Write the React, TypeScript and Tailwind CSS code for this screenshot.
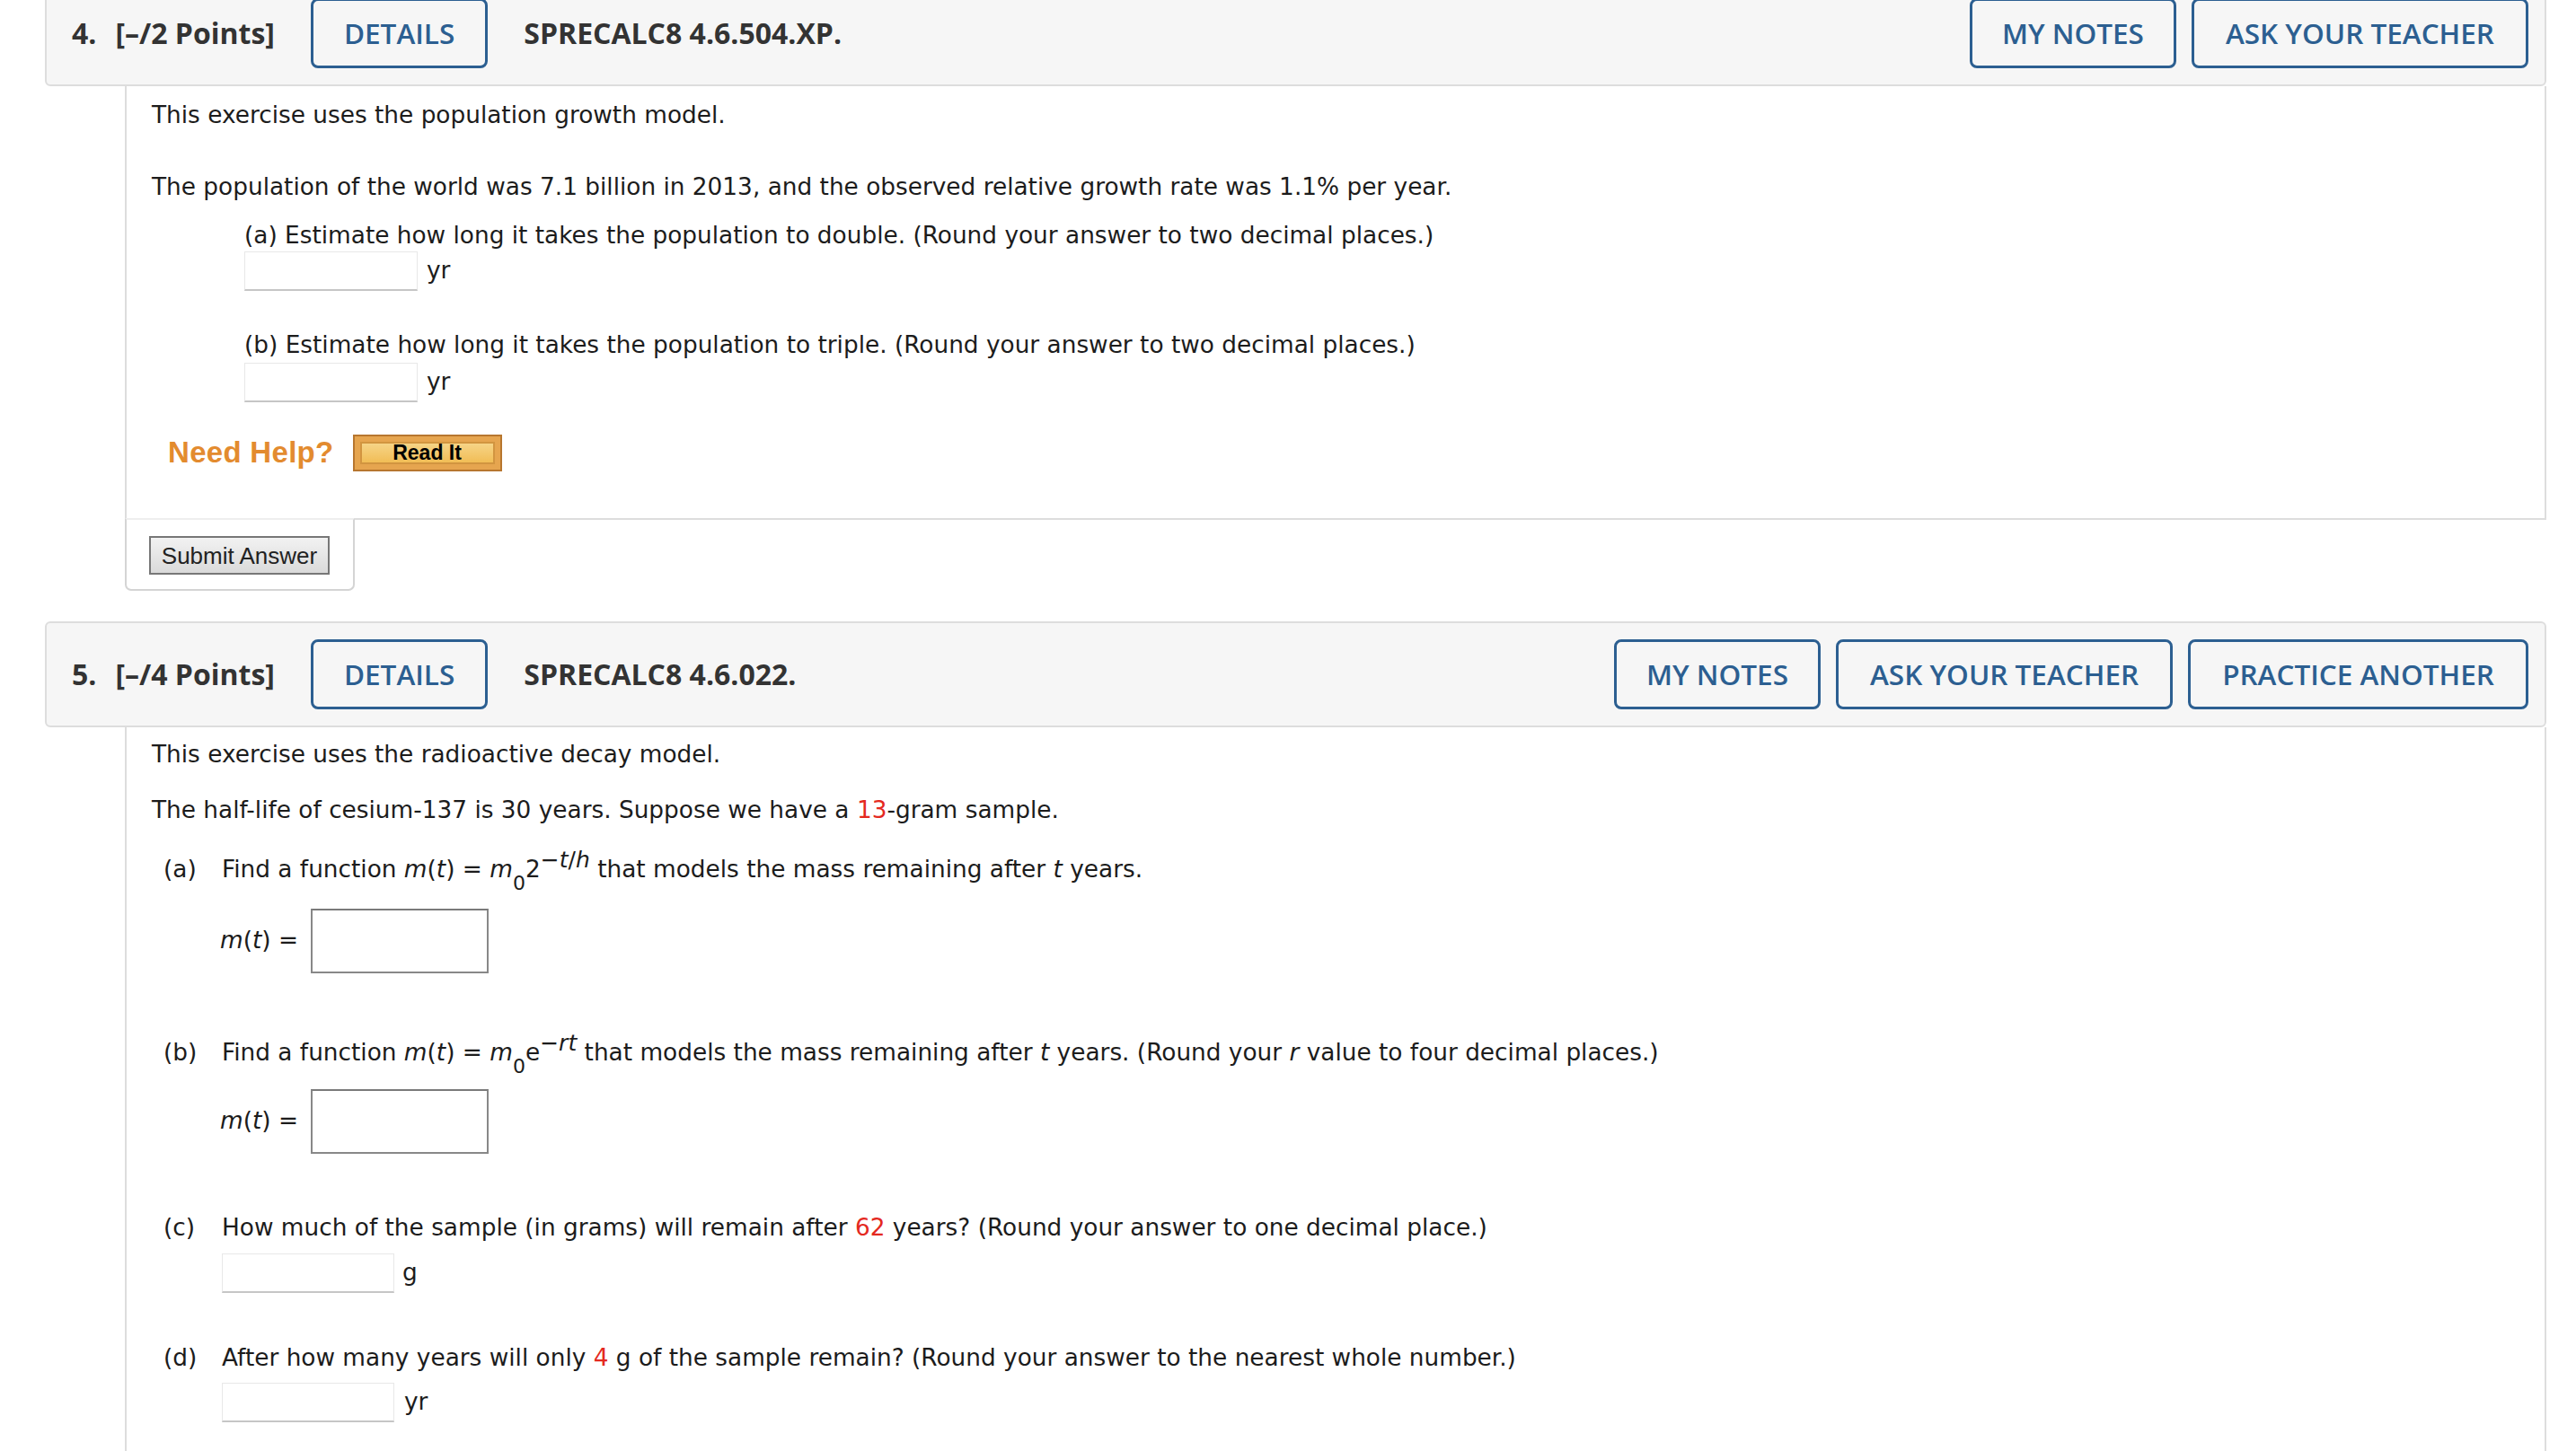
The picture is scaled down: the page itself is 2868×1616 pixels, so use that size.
import React from "react"

const headerBtn =
  "h-[78px] border-[3px] border-[#2c5f91] rounded-[8px] text-[#2c5f91] text-[31.5px] font-semibold flex items-center whitespace-nowrap"

function QuestionHeader({
  num,
  points,
  code,
  actions,
}: {
  num: string
  points: string
  code: string
  actions: string[]
}) {
  return (
    <div className="h-[118px] flex items-center bg-[#f6f6f6] border-2 border-[#dddddd] rounded-[6px] pl-[28px] pr-[18px] font-['Open_Sans',sans-serif] text-[#333333]">
      <span className="text-[32px] font-bold">{num}</span>
      <span className="text-[32px] font-bold ml-[21px]">{points}</span>
      <button className={headerBtn + " ml-[40px] px-[34px]"}>DETAILS</button>
      <span className="text-[32px] font-bold ml-[40px]">{code}</span>
      <div className="ml-auto flex gap-[17px]">
        {actions.map((a) => (
          <button key={a} className={headerBtn + (a === "MY NOTES" ? " px-[33px]" : " px-[35px]")}>
            {a}
          </button>
        ))}
      </div>
    </div>
  )
}

// small answer box with the soft bottom shadow
function SoftInput({ w }: { w: string }) {
  return <div className={"h-[44px] bg-white border border-[#e8e8e8] border-b-2 border-b-[#c6c6c6] " + w} />
}

function BigInput() {
  return <div className="w-[198px] h-[72px] bg-white border-2 border-[#888888] border-t-[#7a7a7a]" />
}

const Red = ({ children }: { children: React.ReactNode }) => <span className="text-[#e4291f]">{children}</span>

function MOfT() {
  return (
    <span>
      <i>m</i>(<i>t</i>)
    </span>
  )
}

export default function App() {
  return (
    <div className="w-[2868px] h-[1616px] overflow-hidden bg-white">
      <div className="-mt-[22px] pl-[50px] pr-[33px] font-['DejaVu_Sans',sans-serif] text-[26.35px] text-[#1c1c1c]">
        {/* question 4 */}
        <QuestionHeader num="4." points="[–/2 Points]" code="SPRECALC8 4.6.504.XP." actions={["MY NOTES", "ASK YOUR TEACHER"]} />

        <div className="ml-[89px] border-x-2 border-b-2 border-[#dddddd] pl-[28px] pt-[12px] pb-[53px]">
          <p className="leading-[40px]">This exercise uses the population growth model.</p>
          <p className="leading-[40px] mt-[40px]">
            The population of the world was 7.1 billion in 2013, and the observed relative growth rate was 1.1% per year.
          </p>

          <div className="ml-[103px] mt-[16px]">
            <p className="leading-[36px]">(a) Estimate how long it takes the population to double. (Round your answer to two decimal places.)</p>
            <div className="flex items-center gap-[10px]">
              <SoftInput w="w-[193px] h-[42px]" />
              <span>yr</span>
            </div>

            <p className="leading-[36px] mt-[42px]">(b) Estimate how long it takes the population to triple. (Round your answer to two decimal places.)</p>
            <div className="flex items-center gap-[10px] mt-[2px]">
              <SoftInput w="w-[193px] h-[42px]" />
              <span>yr</span>
            </div>
          </div>

          <div className="flex items-center ml-[18px] mt-[36px] h-[40px]">
            <span className="font-['Liberation_Sans',Arial,sans-serif] font-bold text-[33px] text-[#e38b2f] tracking-[0.3px]">
              Need Help?
            </span>
            <button className="ml-[21px] w-[166px] h-[41px] p-[6px] bg-[#e6a54f] border-2 border-[#b7762f]">
              <div className="w-full h-full flex items-center justify-center bg-gradient-to-b from-[#f6d486] to-[#f1bd55] border-2 border-[#d29540] font-['Liberation_Sans',Arial,sans-serif] font-bold text-[23px] text-black leading-none">
                Read It
              </div>
            </button>
          </div>
        </div>

        <div className="ml-[89px] w-[256px] -mt-[2px] border-x-2 border-b-2 border-t-2 border-[#d4d4d4] border-t-[#eeeeee] rounded-b-[7px] pl-[25px] pt-[18px] pb-[16px]">
          <button className="w-[201px] h-[43px] border-2 border-[#777777] bg-gradient-to-b from-[#f2f2f2] to-[#dadada] font-['Liberation_Sans',Arial,sans-serif] text-[26px] text-[#222222] leading-none">
            Submit Answer
          </button>
        </div>

        {/* question 5 */}
        <div className="mt-[34px]">
          <QuestionHeader
            num="5."
            points="[–/4 Points]"
            code="SPRECALC8 4.6.022."
            actions={["MY NOTES", "ASK YOUR TEACHER", "PRACTICE ANOTHER"]}
          />
        </div>

        <div className="ml-[89px] border-x-2 border-[#dddddd] pl-[28px] pt-[10px] pb-[40px]">
          <p className="leading-[40px]">This exercise uses the radioactive decay model.</p>
          <p className="leading-[40px] mt-[22px]">
            The half-life of cesium-137 is 30 years. Suppose we have a <Red>13</Red>-gram sample.
          </p>

          <div className="ml-[13px]">
            <div className="flex leading-[40px] mt-[26px]">
              <span className="w-[65px] shrink-0">(a)</span>
              <span>
                Find a function <MOfT /> = <i>m</i>
                <span className="text-[22px] relative top-[14px]">0</span>2
                <span className="text-[25px] relative -top-[11px]">
                  −<i>t</i>/<i>h</i>
                </span>{" "}
                that models the mass remaining after <i>t</i> years.
              </span>
            </div>
            <div className="flex items-center mt-[22px] ml-[63px] gap-[10px]">
              <span className="w-[91px]">
                <MOfT /> =
              </span>
              <BigInput />
            </div>

            <div className="flex leading-[40px] mt-[68px]">
              <span className="w-[65px] shrink-0">(b)</span>
              <span>
                Find a function <MOfT /> = <i>m</i>
                <span className="text-[22px] relative top-[14px]">0</span>e
                <span className="text-[25px] relative -top-[11px]">
                  −<i>rt</i>
                </span>{" "}
                that models the mass remaining after <i>t</i> years. (Round your <i>r</i> value to four decimal places.)
              </span>
            </div>
            <div className="flex items-center mt-[19px] ml-[63px] gap-[10px]">
              <span className="w-[91px]">
                <MOfT /> =
              </span>
              <BigInput />
            </div>

            <div className="flex leading-[40px] mt-[62px]">
              <span className="w-[65px] shrink-0">(c)</span>
              <span>
                How much of the sample (in grams) will remain after <Red>62</Red> years? (Round your answer to one decimal place.)
              </span>
            </div>
            <div className="flex items-center mt-[9px] ml-[65px] gap-[9px]">
              <SoftInput w="w-[192px]" />
              <span>g</span>
            </div>

            <div className="flex leading-[40px] mt-[52px]">
              <span className="w-[65px] shrink-0">(d)</span>
              <span>
                After how many years will only <Red>4</Red> g of the sample remain? (Round your answer to the nearest whole number.)
              </span>
            </div>
            <div className="flex items-center mt-[8px] ml-[65px] gap-[11px]">
              <SoftInput w="w-[192px]" />
              <span>yr</span>
            </div>
          </div>
        </div>
      </div>
    </div>
  )
}
